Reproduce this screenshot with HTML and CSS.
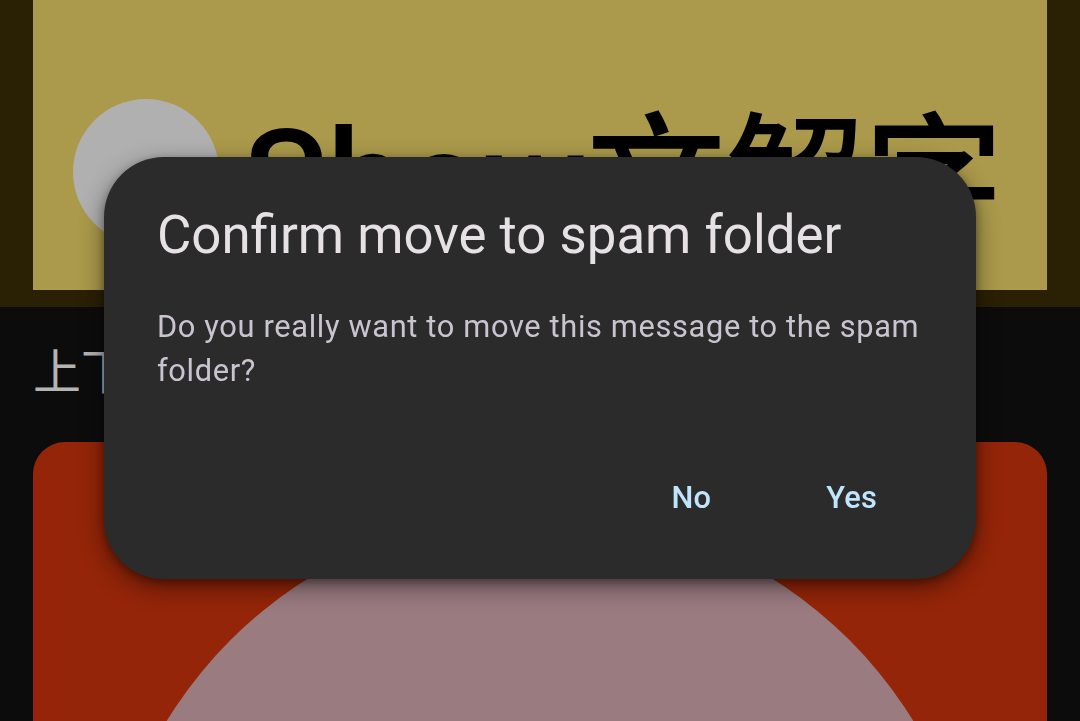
FILE: index.html
```html
<!DOCTYPE html>
<html lang="zh">
<head>
    <meta charset="UTF-8">
    <title>Show文解字</title>
    <link rel="stylesheet" href="styles.css">
</head>
<body>
<div id="app">
    <div class="top-band">
        <div class="hero-card">
            <div class="hero-row">
                <div class="avatar"></div>
                <span class="hero-title">Show文解字</span>
            </div>
        </div>
    </div>

    <div class="section">
        <h2 class="section-title">上下文</h2>
        <div class="red-card">
            <div class="pink-circle"></div>
        </div>
    </div>
</div>

<div class="dialog">
    <h1 class="dialog-title">Confirm move to spam folder</h1>
    <p class="dialog-text">Do you really want to move this message to the spam folder?</p>
    <div class="dialog-actions">
        <button type="button" class="dialog-btn">No</button>
        <button type="button" class="dialog-btn">Yes</button>
    </div>
</div>
</body>
</html>
```

FILE: styles.css
```css
html, body {
    margin: 0;
    padding: 0;
    height: 721px;
    overflow: hidden;
}

body {
    background: #0c0c0c;
    font-family: Roboto, "Noto Sans CJK SC", sans-serif;
}

/* top area */
.top-band {
    background: #2a2003;
    padding: 0 33px 17px;
}

.hero-card {
    background: #ab9a4b;
    height: 290px;
    box-sizing: border-box;
    padding: 99px 0 0 40px;
    overflow: hidden;
}

.hero-row {
    display: flex;
    align-items: center;
    height: 146px;
    gap: 24px;
}

.avatar {
    flex: none;
    width: 146px;
    height: 146px;
    border-radius: 50%;
    background: #b0b0b0;
}

.hero-title {
    margin-top: 20px;
    font-size: 139px;
    font-weight: 500;
    line-height: 146px;
    color: #000;
    white-space: nowrap;
}

/* list section */
.section {
    padding: 34px 33px 0;
}

.section-title {
    margin: 0 0 37px;
    height: 64px;
    font-size: 48px;
    line-height: 64px;
    font-weight: 400;
    color: #b4b4b4;
    white-space: nowrap;
}

.red-card {
    background: #942508;
    border-radius: 32px 32px 0 0;
    height: 279px;
    padding-top: 70px;
    box-sizing: border-box;
    overflow: hidden;
}

.pink-circle {
    width: 876px;
    height: 876px;
    margin: 0 auto;
    border-radius: 50%;
    background: #9a7b80;
}

/* dialog */
.dialog {
    position: fixed;
    left: 104px;
    top: 157px;
    width: 872px;
    box-sizing: border-box;
    padding: 46px 53px 59px;
    background: #2b2b2b;
    border-radius: 60px;
    box-shadow: 0 8px 24px rgba(0, 0, 0, 0.45), 0 3px 8px rgba(0, 0, 0, 0.3);
}

.dialog-title {
    margin: 0 0 38px;
    font-size: 52.8px;
    line-height: 64px;
    font-weight: 400;
    color: #e6e1e5;
    white-space: nowrap;
}

.dialog-text {
    margin: 0 -40px 83px 0;
    font-size: 30.8px;
    line-height: 44px;
    letter-spacing: 0.65px;
    color: #cac4d0;
}

.dialog-actions {
    display: flex;
    justify-content: flex-end;
    gap: 63px;
    padding-right: 20px;
}

.dialog-btn {
    background: none;
    border: none;
    padding: 0 26px;
    margin: 0;
    font-family: Roboto, sans-serif;
    font-size: 30.8px;
    font-weight: 500;
    letter-spacing: 0.22px;
    line-height: 44px;
    color: #c0e4fc;
}
```
